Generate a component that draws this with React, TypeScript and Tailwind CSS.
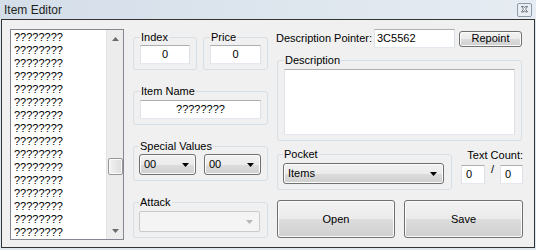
import React from 'react';

const items = Array.from({ length: 16 }, () => '????????');

const TextBox: React.FC<{ value: string; className?: string }> = ({ value, className = '' }) => (
  <div
    className={`h-[19px] bg-white border border-[#abadb3] border-l-[#e2e3ea] border-r-[#dbdfe6] border-b-[#e3e9ef] flex items-center leading-[13px] ${className}`}
  >
    {value}
  </div>
);

const Group: React.FC<{ label: string; className?: string; children?: React.ReactNode }> = ({ label, className = '', children }) => (
  <fieldset className={`border border-[#d5dfe5] rounded-[3px] px-[6px] pb-[5px] ${className}`}>
    <legend className="px-[1px] leading-[13px]">{label}</legend>
    {children}
  </fieldset>
);

const Arrow: React.FC<{ color?: string; up?: boolean }> = ({ color = '#000', up = false }) => (
  <svg width="7" height="4" viewBox="0 0 7 4">
    <path d={up ? 'M0 4h7L3.5 0z' : 'M0 0h7L3.5 4z'} fill={color} />
  </svg>
);

const Combo: React.FC<{ value?: string; className?: string; disabled?: boolean }> = ({ value = '', className = '', disabled = false }) => (
  <div
    className={
      disabled
        ? `h-[21px] rounded-[2px] border border-[#c9cbcf] bg-[#f4f4f4] flex items-center justify-end pr-[6px] ${className}`
        : `h-[21px] rounded-[3px] border border-[#707070] bg-[linear-gradient(to_bottom,#f2f2f2_0%,#ebebeb_50%,#dddddd_50%,#cfcfcf_100%)] shadow-[inset_0_0_0_1px_#fbfbfb] flex items-center justify-between pl-[4px] pr-[6px] ${className}`
    }
  >
    {!disabled && <span className="leading-[13px]">{value}</span>}
    <Arrow color={disabled ? '#b6b6b6' : '#000'} />
  </div>
);

const Button: React.FC<{ label: string; className?: string }> = ({ label, className = '' }) => (
  <button
    className={`rounded-[3px] border border-[#707070] bg-[linear-gradient(to_bottom,#f2f2f2_0%,#ebebeb_50%,#dddddd_50%,#cfcfcf_100%)] shadow-[inset_0_0_0_1px_#fbfbfb] flex items-center justify-center leading-[13px] ${className}`}
  >
    {label}
  </button>
);

const App: React.FC = () => {
  return (
    <div className="w-[536px] h-[250px] bg-[#dfe7ef] flex flex-col font-['Liberation_Sans',Arial,sans-serif] text-[11px] text-black overflow-hidden">
      {/* title bar */}
      <div className="h-[19px] flex items-center justify-between pl-[4px] pr-[4px] bg-[linear-gradient(to_right,#d4dee9,#e6ecf2)]">
        <span className="text-[12px] text-[#1e1e1e] leading-[14px]">Item Editor</span>
        <svg width="15" height="14" viewBox="0 0 15 14" className="mt-[1px]">
          <rect x="0.5" y="0.5" width="14" height="13" rx="1.5" fill="#e9eef4" stroke="#8d9aa8" />
          <path
            d="M4.5 3.5h2l1 1.3 1-1.3h2l-2 2.6 2 2.9h-2l-1-1.4-1 1.4h-2l2-2.9z"
            fill="#fff"
            stroke="#5a6470"
            strokeWidth="0.9"
            strokeLinejoin="round"
          />
        </svg>
      </div>

      {/* client area */}
      <div className="ml-[1px] w-[534px] h-[229px] border border-[#333333] bg-[#f0f0f0] flex pl-[8px] pt-[9px]">
        {/* list box */}
        <div className="w-[114px] h-[211px] border border-[#828790] bg-white flex">
          <div className="flex-1 overflow-hidden pl-[3px] pt-[1px] leading-[13px]">
            {items.map((t, i) => (
              <div key={i}>{t}</div>
            ))}
          </div>
          <div className="w-[17px] bg-[#ececec] border-l border-[#e4e4e4] flex flex-col">
            <div className="h-[17px] flex items-center justify-center">
              <Arrow up color="#6b6b6b" />
            </div>
            <div className="flex-1 flex flex-col items-center">
              <div className="mt-[111px] w-[15px] h-[17px] rounded-[2px] border border-[#979797] bg-[linear-gradient(to_right,#f3f3f3,#dcdcdc)] shadow-[inset_0_0_0_1px_#fafafa]" />
            </div>
            <div className="h-[17px] flex items-center justify-center">
              <Arrow color="#6b6b6b" />
            </div>
          </div>
        </div>

        {/* middle column */}
        <div className="ml-[9px] w-[135px] flex flex-col gap-[15px] pt-[2px]">
          <div className="flex gap-[6px]">
            <Group label="Index" className="w-[64px]">
              <TextBox value="0" className="mt-[1px] justify-center" />
            </Group>
            <Group label="Price" className="w-[65px]">
              <TextBox value="0" className="mt-[1px] justify-center" />
            </Group>
          </div>
          <Group label="Item Name">
            <TextBox value="????????" className="mt-[2px] justify-center" />
          </Group>
          <Group label="Special Values" className="pl-[5px]">
            <div className="mt-[1px] flex gap-[8px]">
              <Combo value="00" className="w-[57px]" />
              <Combo value="00" className="w-[57px]" />
            </div>
          </Group>
          <Group label="Attack" className="pl-[5px]">
            <Combo disabled className="mt-[2px] w-[121px]" />
          </Group>
        </div>

        {/* right column */}
        <div className="ml-[8px] w-[247px] flex flex-col">
          <div className="flex items-center h-[19px]">
            <span className="leading-[13px]">Description Pointer:</span>
            <TextBox value="3C5562" className="ml-[2px] w-[81px] pl-[2px]" />
            <Button label="Repoint" className="ml-auto mr-[1px] w-[63px] h-[16px]" />
          </div>
          <Group label="Description" className="ml-[1px] w-[245px] mt-[6px]">
            <div className="mt-[2px] h-[66px] bg-white border border-[#abadb3] border-l-[#e2e3ea] border-r-[#dbdfe6] border-b-[#e3e9ef]" />
          </Group>
          <div className="flex mt-[7px] ml-[1px]">
            <Group label="Pocket" className="w-[175px] pl-[5px] pb-[2px]">
              <Combo value="Items" className="mt-[2px] w-[161px]" />
            </Group>
            <div className="flex-1 flex flex-col items-end">
              <span className="leading-[13px] mt-[1px]">Text Count:</span>
              <div className="mt-[3px] flex items-start">
                <TextBox value="0" className="w-[24px] pl-[4px]" />
                <span className="mx-[6px] -mt-[2px] leading-[13px]">/</span>
                <TextBox value="0" className="w-[23px] pl-[4px]" />
              </div>
            </div>
          </div>
          <div className="flex mt-[10px] ml-[1px] gap-[9px]">
            <Button label="Open" className="w-[118px] h-[38px]" />
            <Button label="Save" className="w-[119px] h-[38px]" />
          </div>
        </div>
      </div>
    </div>
  );
};

export default App;
